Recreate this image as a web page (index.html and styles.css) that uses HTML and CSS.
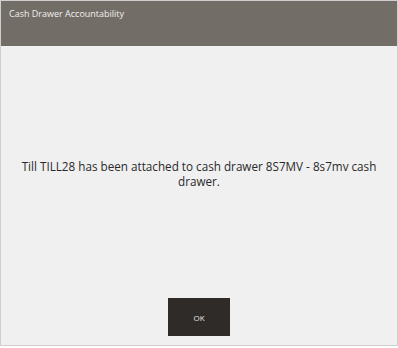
FILE: index.html
```html
<!DOCTYPE html>
<html lang="en">
<head>
  <meta charset="UTF-8" />
  <title>Cash Drawer Accountability</title>
  <link rel="stylesheet" href="styles.css">
</head>
<body>
  <div class="dialog">
    <header class="dialog-header">
      <h1>Cash Drawer Accountability</h1>
    </header>
    <main class="dialog-body">
      <p class="message">Till TILL28 has been attached to cash drawer 8S7MV - 8s7mv cash drawer.</p>
    </main>
    <footer class="dialog-footer">
      <button class="ok-button">OK</button>
    </footer>
  </div>
</body>
</html>
```

FILE: styles.css
```css
body {
  margin: 0;
  padding: 0;
  background: #ffffff;
  font-family: "Open Sans", "DejaVu Sans", sans-serif;
}
.dialog {
  width: 398px;
  height: 346px;
  box-sizing: border-box;
  border: 1px solid #cfcfcf;
  background: #f0f0f0;
  display: flex;
  flex-direction: column;
}
.dialog-header {
  height: 45px;
  background: #736d68;
  padding: 6px 8px 0;
  box-sizing: border-box;
}
.dialog-header h1 {
  margin: 0;
  font-size: 9px;
  font-weight: normal;
  color: #f2f0ee;
}
.dialog-body {
  flex: 1;
  display: flex;
  align-items: center;
  justify-content: center;
  padding: 3px 10px 0;
}
.message {
  margin: 0;
  text-align: center;
  font-size: 11.7px;
  line-height: 15px;
  color: #2a2a2a;
}
.dialog-footer {
  display: flex;
  justify-content: center;
  padding-bottom: 9px;
}
.ok-button {
  width: 62px;
  height: 38px;
  border: none;
  background: #2f2b28;
  color: #e8e6e4;
  font-family: inherit;
  font-size: 8px;
  cursor: pointer;
}
```
